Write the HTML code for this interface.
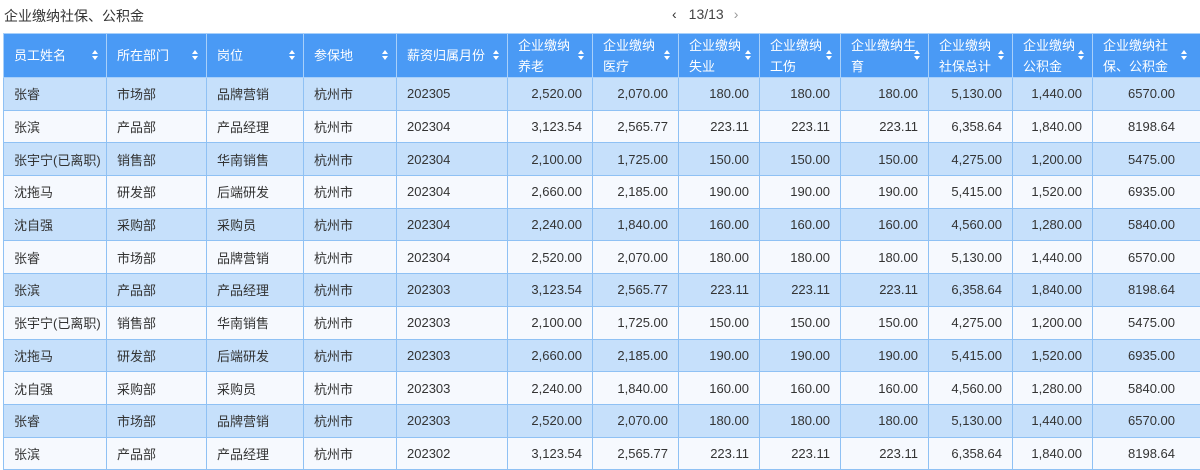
<!DOCTYPE html><html><head><meta charset="utf-8"><style>
body{margin:0;width:1200px;height:469px;overflow:hidden;background:#fff;font-family:"Liberation Sans","Noto Sans CJK SC",sans-serif;color:#333;font-size:13px}
.t{position:absolute;left:4px;top:6px;font-size:14px;color:#333}
.p{position:absolute;left:672px;top:6px;font-size:14px;color:#444}
.p b{font-weight:normal;color:#333;margin-right:12px}.p i{font-style:normal;color:#999;margin-left:10px}
table{position:absolute;left:3px;top:33px;border-collapse:collapse;table-layout:fixed;width:1210px}
th,td{border:1px solid #8fc1f4;padding:0 10px;white-space:nowrap;overflow:hidden}
th{background:#4a9af5;color:#fff;font-weight:normal;height:43px;text-align:left;line-height:21px;position:relative;padding-right:22px;border-color:#a8d0fa}
th:after{content:"";position:absolute;right:8px;top:16px;width:0;height:0;border:3.5px solid transparent;border-bottom:4px solid #fff;border-top:0}
th:before{content:"";position:absolute;right:8px;top:22px;border:3.5px solid transparent;border-top:4px solid #fff;border-bottom:0}
th.l:after,th.l:before{right:26px}
td{height:31.7px}
tr:nth-child(odd) td{background:#c6e0fb}tr:nth-child(even) td{background:#f6f9fe}
td.n{text-align:right}
td.z{padding-right:38px}
</style></head><body>
<div class="t">企业缴纳社保、公积金</div>
<div class="p"><b>‹</b>13/13<i>›</i></div>
<table>
<colgroup><col style="width:103px"><col style="width:100px"><col style="width:97px"><col style="width:93px"><col style="width:111px"><col style="width:85px"><col style="width:86px"><col style="width:81px"><col style="width:81px"><col style="width:88px"><col style="width:84px"><col style="width:80px"><col style="width:121px"></colgroup>
<thead><tr><th>员工姓名</th><th>所在部门</th><th>岗位</th><th>参保地</th><th>薪资归属月份</th><th>企业缴纳<br>养老</th><th>企业缴纳<br>医疗</th><th>企业缴纳<br>失业</th><th>企业缴纳<br>工伤</th><th>企业缴纳生<br>育</th><th>企业缴纳<br>社保总计</th><th>企业缴纳<br>公积金</th><th class="l" style="padding-right:40px">企业缴纳社<br>保、公积金</th></tr></thead>
<tbody>
<tr><td>张睿</td><td>市场部</td><td>品牌营销</td><td>杭州市</td><td>202305</td><td class="n">2,520.00</td><td class="n">2,070.00</td><td class="n">180.00</td><td class="n">180.00</td><td class="n">180.00</td><td class="n">5,130.00</td><td class="n">1,440.00</td><td class="n z">6570.00</td></tr>
<tr><td>张滨</td><td>产品部</td><td>产品经理</td><td>杭州市</td><td>202304</td><td class="n">3,123.54</td><td class="n">2,565.77</td><td class="n">223.11</td><td class="n">223.11</td><td class="n">223.11</td><td class="n">6,358.64</td><td class="n">1,840.00</td><td class="n z">8198.64</td></tr>
<tr><td>张宇宁(已离职)</td><td>销售部</td><td>华南销售</td><td>杭州市</td><td>202304</td><td class="n">2,100.00</td><td class="n">1,725.00</td><td class="n">150.00</td><td class="n">150.00</td><td class="n">150.00</td><td class="n">4,275.00</td><td class="n">1,200.00</td><td class="n z">5475.00</td></tr>
<tr><td>沈拖马</td><td>研发部</td><td>后端研发</td><td>杭州市</td><td>202304</td><td class="n">2,660.00</td><td class="n">2,185.00</td><td class="n">190.00</td><td class="n">190.00</td><td class="n">190.00</td><td class="n">5,415.00</td><td class="n">1,520.00</td><td class="n z">6935.00</td></tr>
<tr><td>沈自强</td><td>采购部</td><td>采购员</td><td>杭州市</td><td>202304</td><td class="n">2,240.00</td><td class="n">1,840.00</td><td class="n">160.00</td><td class="n">160.00</td><td class="n">160.00</td><td class="n">4,560.00</td><td class="n">1,280.00</td><td class="n z">5840.00</td></tr>
<tr><td>张睿</td><td>市场部</td><td>品牌营销</td><td>杭州市</td><td>202304</td><td class="n">2,520.00</td><td class="n">2,070.00</td><td class="n">180.00</td><td class="n">180.00</td><td class="n">180.00</td><td class="n">5,130.00</td><td class="n">1,440.00</td><td class="n z">6570.00</td></tr>
<tr><td>张滨</td><td>产品部</td><td>产品经理</td><td>杭州市</td><td>202303</td><td class="n">3,123.54</td><td class="n">2,565.77</td><td class="n">223.11</td><td class="n">223.11</td><td class="n">223.11</td><td class="n">6,358.64</td><td class="n">1,840.00</td><td class="n z">8198.64</td></tr>
<tr><td>张宇宁(已离职)</td><td>销售部</td><td>华南销售</td><td>杭州市</td><td>202303</td><td class="n">2,100.00</td><td class="n">1,725.00</td><td class="n">150.00</td><td class="n">150.00</td><td class="n">150.00</td><td class="n">4,275.00</td><td class="n">1,200.00</td><td class="n z">5475.00</td></tr>
<tr><td>沈拖马</td><td>研发部</td><td>后端研发</td><td>杭州市</td><td>202303</td><td class="n">2,660.00</td><td class="n">2,185.00</td><td class="n">190.00</td><td class="n">190.00</td><td class="n">190.00</td><td class="n">5,415.00</td><td class="n">1,520.00</td><td class="n z">6935.00</td></tr>
<tr><td>沈自强</td><td>采购部</td><td>采购员</td><td>杭州市</td><td>202303</td><td class="n">2,240.00</td><td class="n">1,840.00</td><td class="n">160.00</td><td class="n">160.00</td><td class="n">160.00</td><td class="n">4,560.00</td><td class="n">1,280.00</td><td class="n z">5840.00</td></tr>
<tr><td>张睿</td><td>市场部</td><td>品牌营销</td><td>杭州市</td><td>202303</td><td class="n">2,520.00</td><td class="n">2,070.00</td><td class="n">180.00</td><td class="n">180.00</td><td class="n">180.00</td><td class="n">5,130.00</td><td class="n">1,440.00</td><td class="n z">6570.00</td></tr>
<tr><td>张滨</td><td>产品部</td><td>产品经理</td><td>杭州市</td><td>202302</td><td class="n">3,123.54</td><td class="n">2,565.77</td><td class="n">223.11</td><td class="n">223.11</td><td class="n">223.11</td><td class="n">6,358.64</td><td class="n">1,840.00</td><td class="n z">8198.64</td></tr>
</tbody></table>
</body></html>
